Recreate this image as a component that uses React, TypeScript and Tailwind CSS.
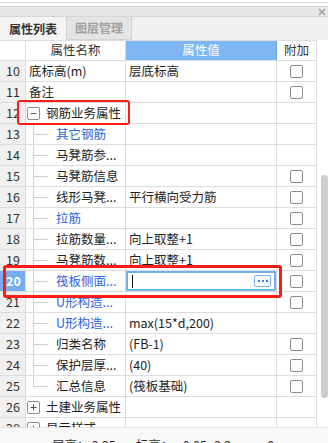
import * as React from 'react';

type Row = {
  n: number;
  name: string;
  value?: string;
  cb?: boolean;
  blue?: boolean;
  child?: boolean;
  last?: boolean;
  group?: '+' | '-';
  editing?: boolean;
};

const rows: Row[] = [
  { n: 10, name: '底标高(m)', value: '层底标高', cb: true },
  { n: 11, name: '备注', cb: true },
  { n: 12, name: '钢筋业务属性', group: '-' },
  { n: 13, name: '其它钢筋', blue: true, child: true },
  { n: 14, name: '马凳筋参...', child: true },
  { n: 15, name: '马凳筋信息', child: true, cb: true },
  { n: 16, name: '线形马凳...', value: '平行横向受力筋', child: true, cb: true },
  { n: 17, name: '拉筋', blue: true, child: true, cb: true },
  { n: 18, name: '拉筋数量...', value: '向上取整+1', child: true, cb: true },
  { n: 19, name: '马凳筋数...', value: '向上取整+1', child: true, cb: true },
  { n: 20, name: '筏板侧面...', blue: true, child: true, cb: true, editing: true },
  { n: 21, name: 'U形构造...', blue: true, child: true, cb: true },
  { n: 22, name: 'U形构造...', value: 'max(15*d,200)', blue: true, child: true },
  { n: 23, name: '归类名称', value: '(FB-1)', child: true, cb: true },
  { n: 24, name: '保护层厚...', value: '(40)', child: true, cb: true },
  { n: 25, name: '汇总信息', value: '(筏板基础)', child: true, cb: true, last: true },
  { n: 26, name: '土建业务属性', group: '+' },
  { n: 28, name: '显示样式', group: '+' },
];

const Checkbox = () => (
  <span className="block h-[13px] w-[13px] rounded-[2px] border border-[#8c8c8c] bg-white" />
);

const TreeLine = ({ last }: { last?: boolean }) => (
  <svg width="30" height="20" className="shrink-0">
    <line x1="7.5" y1="0" x2="7.5" y2={last ? 10.5 : 20} stroke="#cfcfcf" strokeWidth="1" />
    <line x1="7.5" y1="10.5" x2="22" y2="10.5" stroke="#cfcfcf" strokeWidth="1" />
  </svg>
);

const GroupBox = ({ sign }: { sign: '+' | '-' }) => (
  <span className="ml-[1px] flex h-[13px] w-[13px] shrink-0 items-center justify-center rounded-[2px] border border-[#8c8c8c] bg-white">
    <svg width="9" height="9">
      <line x1="1.5" y1="4.5" x2="7.5" y2="4.5" stroke="#555" strokeWidth="1" />
      {sign === '+' && <line x1="4.5" y1="1.5" x2="4.5" y2="7.5" stroke="#555" strokeWidth="1" />}
    </svg>
  </span>
);

const TableRow = ({ r }: { r: Row }) => (
  <div className="flex h-[21px] border-b border-[#dcdcdc]">
    <div
      className={
        r.editing
          ? 'flex w-[26px] shrink-0 items-center border-r border-[#dcdcdc] bg-[#74aef0] pl-[6px] font-bold text-white'
          : 'flex w-[26px] shrink-0 items-center border-r border-[#dcdcdc] bg-[#f0f0f0] pl-[6px] text-[#333]'
      }
    >
      {r.n}
    </div>
    <div className="flex w-[100px] shrink-0 items-center overflow-hidden whitespace-nowrap border-r border-[#dcdcdc]">
      {r.group ? (
        <>
          <GroupBox sign={r.group} />
          <span className="ml-[6px] text-[#222]">{r.name}</span>
        </>
      ) : r.child ? (
        <>
          <TreeLine last={r.last} />
          <span className={r.blue ? 'text-[#2b63dc]' : 'text-[#222]'}>{r.name}</span>
        </>
      ) : (
        <span className="pl-[3px] text-[#222]">{r.name}</span>
      )}
    </div>
    <div className="flex w-[151px] shrink-0 items-center whitespace-nowrap border-r border-[#dcdcdc]">
      {r.editing ? (
        <div className="flex h-full w-full items-center border-2 border-[#76aee8] bg-white">
          <span className="ml-[4px] h-[13px] w-px bg-[#111]" />
          <span className="flex-1" />
          <span className="mr-[3px] flex h-[12px] w-[17px] items-center justify-center gap-[2px] rounded-[2px] border border-[#7ab0e6] bg-white">
            <span className="h-[2px] w-[2px] bg-[#3b7fd6]" />
            <span className="h-[2px] w-[2px] bg-[#3b7fd6]" />
            <span className="h-[2px] w-[2px] bg-[#3b7fd6]" />
          </span>
        </div>
      ) : (
        <span className="pl-[3px] text-[#222]">{r.value}</span>
      )}
    </div>
    <div className="flex w-[40px] shrink-0 items-center justify-center border-r border-[#dcdcdc]">
      {r.cb && <Checkbox />}
    </div>
  </div>
);

export default function App() {
  return (
    <div
      className="flex h-[443px] w-[328px] flex-col overflow-hidden bg-white text-[12.5px]"
      style={{ fontFamily: '"Noto Sans CJK SC", "Noto Sans", sans-serif' }}
    >
      <div className="h-[3px] border-b border-[#dadada]" />
      <div className="h-[3px]" />
      <div className="flex h-[11px] items-center justify-end border-y border-[#d6d6d6] bg-[#e6e6e6] pr-[2px]">
        <svg width="8" height="8">
          <line x1="1" y1="1" x2="7" y2="7" stroke="#9a9a9a" strokeWidth="1.2" />
          <line x1="7" y1="1" x2="1" y2="7" stroke="#9a9a9a" strokeWidth="1.2" />
        </svg>
      </div>
      <div className="flex h-[23px] bg-[#f0f0f0]">
        <div className="flex w-[67px] items-center justify-center border-r border-[#d4d4d4] bg-[#f3f3f3] text-[12px] font-bold text-[#333]">
          属性列表
        </div>
        <div className="flex w-[65px] items-center justify-center border-r border-b border-[#d4d4d4] bg-[#e4e4e4] text-[12px] font-bold text-[#a0a0a0]">
          图层管理
        </div>
      </div>
      <div className="relative flex h-[387px] overflow-hidden">
        <div className="w-[317px] shrink-0">
          <div className="flex h-[21px] border-y border-[#dcdcdc]">
            <div className="w-[26px] shrink-0 border-r border-[#dcdcdc]" />
            <div className="flex w-[100px] shrink-0 items-center justify-center border-r border-[#dcdcdc] text-[#333]">
              属性名称
            </div>
            <div className="flex w-[151px] shrink-0 items-center justify-center border-r border-[#6aa4e6] bg-[#7db6f3] text-white">
              属性值
            </div>
            <div className="flex w-[40px] shrink-0 items-center justify-center border-r border-[#dcdcdc] text-[#333]">
              附加
            </div>
          </div>
          {rows.map((r) => (
            <TableRow key={r.n} r={r} />
          ))}
        </div>
        <div className="flex w-[11px] flex-col pl-[4px] pt-[135px]">
          <div className="h-[223px] w-[7px] rounded-[4px] bg-[#cdcdcd]" />
        </div>
        <div className="absolute left-[17px] top-[60px] h-[25px] w-[113px] rounded-[3px] border-[2.5px] border-[#ff1a1a]" />
        <div className="absolute left-[3px] top-[225px] h-[33px] w-[279px] rounded-[3px] border-[3px] border-[#ff1a1a]" />
      </div>
      <div className="flex h-[16px] border-t border-[#e2e2e2] bg-[#f8f8f8] pt-[8px] leading-[17px] text-[#333]">
        <span className="ml-[52px]">层高：</span>
        <span className="ml-[2px]">3.25</span>
        <span className="ml-[20px]">标高：</span>
        <span className="ml-[5px]">-0.05~3.2</span>
        <span className="ml-[36px]">0</span>
      </div>
    </div>
  );
}
